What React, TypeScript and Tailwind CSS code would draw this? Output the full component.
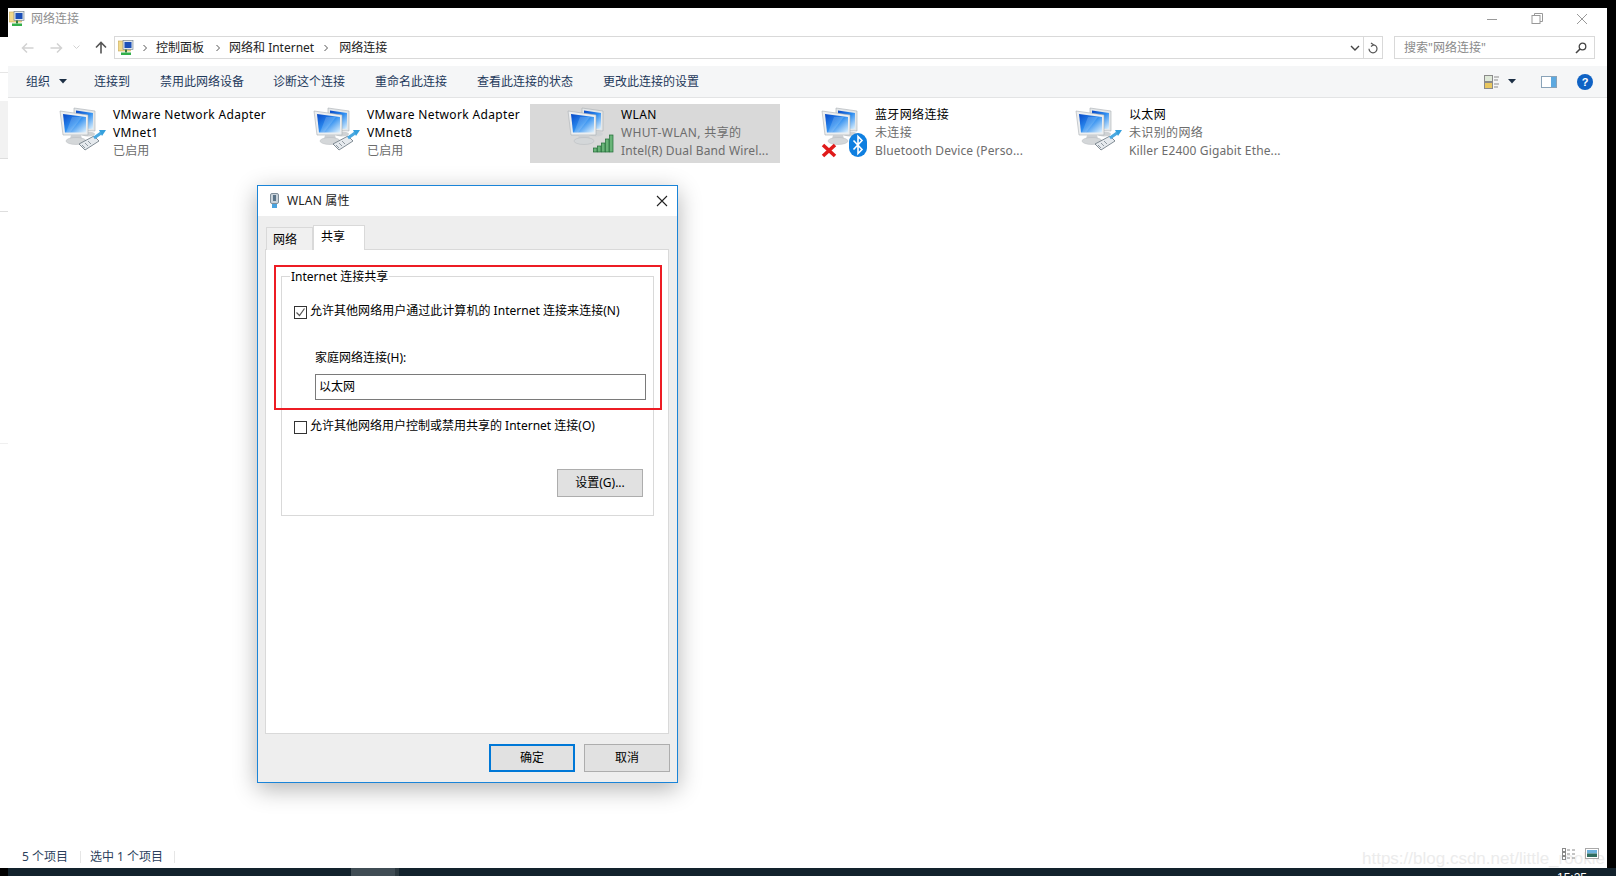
import React, { useId } from "react";

const font = "font-['Noto_Sans','Noto_Sans_CJK_SC',sans-serif]";

const NetIcon = ({ overlay }: { overlay: "cable" | "wifi" | "bluetooth" }) => {
  const id = useId();
  return (
    <svg width="48" height="48" viewBox="0 0 48 48" className="shrink-0 overflow-visible">
      <defs>
        <linearGradient id={id} x1="0" y1="0" x2="1" y2="1">
          <stop offset="0" stopColor="#0648c8" />
          <stop offset="0.5" stopColor="#2d8df0" />
          <stop offset="1" stopColor="#e2f3fd" />
        </linearGradient>
      </defs>
      {/* back monitor */}
      <polygon points="16,2 37,5 37,25 16,24" fill="#e4e7e9" stroke="#a9afb3" strokeWidth="0.6" />
      <polygon points="18,4.5 35,7 35,23 18,22" fill={`url(#${id})`} />
      <ellipse cx="30" cy="28" rx="7" ry="2.5" fill="#cfd2d4" />
      {/* front monitor */}
      <polygon points="2,5 30,9 30,29 5,29" fill="#eceef0" stroke="#a9afb3" strokeWidth="0.6" />
      <polygon points="5,8 28,11 28,26.5 7,26.5" fill={`url(#${id})`} />
      <polygon points="14,11 24,11 12,26.5 8,26.5" fill="#ffffff" opacity="0.18" />
      <polygon points="13,29 23,29 24,33 12,33" fill="#cdd0d3" />
      <ellipse cx="18" cy="35" rx="10" ry="3.5" fill="#d4d7d9" stroke="#b5b9bc" strokeWidth="0.5" />
      {overlay === "cable" && (
        <g>
          <polygon points="21,38 36,30 41,35 27,44" fill="#e6eaee" stroke="#66727c" strokeWidth="0.8" />
          <path d="M24,39 L27,42 M27,37 L30,40 M30,35 L33,38" stroke="#7a858e" strokeWidth="0.8" />
          <path d="M36,32 L43,27" stroke="#4aa8e0" strokeWidth="3" />
          <polygon points="41,24 48,24 44,30" fill="#35a0dd" />
        </g>
      )}
      {overlay === "wifi" && (
        <g fill="#69b478" stroke="#1f6b34" strokeWidth="0.7">
          <rect x="27.5" y="42" width="3.5" height="4" />
          <rect x="31.5" y="40" width="3.5" height="6" />
          <rect x="35.5" y="37" width="3.5" height="9" />
          <rect x="39.5" y="33" width="3.5" height="13" />
          <rect x="43.5" y="29" width="3.5" height="17" />
        </g>
      )}
      {overlay === "bluetooth" && (
        <g>
          <path d="M3,39 L15,50 M15,39 L3,50" stroke="#e01a1a" strokeWidth="3.6" />
          <rect x="29" y="27" width="18" height="24" rx="9" fill="#0f7fe0" />
          <path d="M33.5,34.5 L42,43.5 L38,47.5 L38,30.5 L42,34.5 L33.5,43.5" fill="none" stroke="#fff" strokeWidth="1.6" />
        </g>
      )}
    </svg>
  );
};

const FolderIcon = () => (
  <svg width="16" height="16" viewBox="0 0 16 16" className="shrink-0">
    <rect x="0.5" y="1" width="12" height="10" fill="#f1d98a" stroke="#c9a850" strokeWidth="0.6" />
    <rect x="5" y="0.5" width="10" height="9" fill="#dfe6ec" stroke="#6d7c8a" strokeWidth="0.6" />
    <rect x="6.5" y="2" width="7" height="6" fill="#1b4fb8" />
    <rect x="7" y="9.5" width="2" height="3" fill="#3a7a3a" />
    <rect x="3" y="12.5" width="10" height="2.5" fill="#32b04a" />
  </svg>
);

const Crumb = () => (
  <svg width="6" height="8" viewBox="0 0 6 8" className="shrink-0">
    <path d="M1.5,1 L4.5,4 L1.5,7" fill="none" stroke="#555" strokeWidth="1" />
  </svg>
);

const Arrow = ({ flip, color }: { flip?: boolean; color: string }) => (
  <svg width="13" height="12" viewBox="0 0 13 12" className={flip ? "shrink-0 rotate-180" : "shrink-0"}>
    <path d="M12.5,6 L1.5,6 M6,1.5 L1.5,6 L6,10.5" fill="none" stroke={color} strokeWidth="1.5" />
  </svg>
);

const Caret = () => (
  <svg width="8" height="5" viewBox="0 0 8 5" className="shrink-0">
    <polygon points="0,0 8,0 4,4.5" fill="#1c2f45" />
  </svg>
);

const items = [
  { l1: "VMware Network Adapter", l2: "VMnet1", l3: "已启用", overlay: "cable" as const, l2dark: true },
  { l1: "VMware Network Adapter", l2: "VMnet8", l3: "已启用", overlay: "cable" as const, l2dark: true },
  { l1: "WLAN", l2: "WHUT-WLAN, 共享的", l3: "Intel(R) Dual Band Wirel...", overlay: "wifi" as const, selected: true },
  { l1: "蓝牙网络连接", l2: "未连接", l3: "Bluetooth Device (Perso...", overlay: "bluetooth" as const },
  { l1: "以太网", l2: "未识别的网络", l3: "Killer E2400 Gigabit Ethe...", overlay: "cable" as const },
];

const App = () => {
  return (
    <div className={`${font} relative w-[1616px] h-[876px] overflow-hidden bg-black flex flex-col text-[12px] leading-[16px] text-[#1a1a1a]`}>
      <div className="h-2 shrink-0 bg-black" />
      <div className="flex flex-1 min-h-0">
        {/* left edge of the window behind */}
        <div className="w-2 shrink-0 flex flex-col">
          <div className="h-[29px] bg-black" />
          <div className="h-[36px] bg-white border-b border-[#e6e6e6]" />
          <div className="h-[28px] bg-white" />
          <div className="h-[58px] bg-[#f2f2f2] border-b border-[#dedede]" />
          <div className="h-[53px] bg-white border-b border-[#dedede]" />
          <div className="h-[232px] bg-white border-b border-[#f0f0f0]" />
          <div className="flex-1 bg-white" />
        </div>
        {/* explorer window */}
        <div className="flex-1 bg-white flex flex-col min-w-0">
          <div className="h-[27px] shrink-0 flex items-center pl-[1px] pr-5 pb-[5px] text-[#9a9a9a]">
            <FolderIcon />
            <span className="ml-[6px] text-[#8f8f8f]">网络连接</span>
            <svg width="100" height="12" viewBox="0 0 100 12" className="ml-auto">
              <path d="M0,6.5 H10" stroke="#999" strokeWidth="1" />
              <rect x="45" y="2.5" width="8" height="8" fill="none" stroke="#999" />
              <path d="M47.5,2.5 V0.5 H55.5 V8.5 H53" fill="none" stroke="#999" />
              <path d="M90,1 L100,11 M100,1 L90,11" stroke="#999" strokeWidth="1" />
            </svg>
          </div>
          {/* address bar */}
          <div className="mt-px h-[23px] shrink-0 flex items-center">
            <div className="w-[106px] shrink-0 flex items-center pl-[13px]">
              <Arrow color="#d2d2d2" />
              <span className="w-4" />
              <Arrow flip color="#d2d2d2" />
              <svg width="7" height="5" viewBox="0 0 7 5" className="ml-[10px] shrink-0">
                <path d="M0.5,0.5 L3.5,3.5 L6.5,0.5" fill="none" stroke="#d2d2d2" />
              </svg>
              <svg width="12" height="13" viewBox="0 0 12 13" className="ml-[15px] shrink-0">
                <path d="M6,12.5 V2 M1,6.5 L6,1.5 L11,6.5" fill="none" stroke="#555" strokeWidth="1.6" />
              </svg>
            </div>
            <div className="w-[1269px] h-[23px] shrink-0 border border-[#d9d9d9] flex items-center pl-[3px] text-[#222]">
              <FolderIcon />
              <span className="ml-2"><Crumb /></span>
              <span className="ml-[8px]">控制面板</span>
              <span className="ml-[11px]"><Crumb /></span>
              <span className="ml-[8px]">网络和 Internet</span>
              <span className="ml-[9px]"><Crumb /></span>
              <span className="ml-[10px]">网络连接</span>
              <svg width="10" height="6" viewBox="0 0 10 6" className="ml-auto shrink-0">
                <path d="M1,1 L5,5 L9,1" fill="none" stroke="#444" strokeWidth="1.4" />
              </svg>
              <div className="w-px h-full bg-[#d9d9d9] ml-[3px]" />
              <svg width="12" height="12" viewBox="0 0 12 12" className="mx-[3px] shrink-0">
                <path d="M4,1 L6.5,2.8 L4,4.6 M6,2.8 A4,4 0 1 1 2,6.8" fill="none" stroke="#555" strokeWidth="1.2" />
              </svg>
            </div>
            <div className="ml-[11px] w-[201px] h-[23px] shrink-0 border border-[#d9d9d9] flex items-center pl-[9px] pr-[7px] text-[#8a8a8a]">
              <span>搜索"网络连接"</span>
              <svg width="12" height="12" viewBox="0 0 12 12" className="ml-auto shrink-0">
                <circle cx="7.5" cy="4.5" r="3.3" fill="none" stroke="#444" strokeWidth="1.3" />
                <path d="M5,7 L1,11" stroke="#444" strokeWidth="1.6" />
              </svg>
            </div>
          </div>
          {/* toolbar */}
          <div className="mt-[7px] h-8 shrink-0 bg-[#f5f6f7] border-b border-[#e3e4e5] flex items-center text-[#1e395b] relative">
            <span className="ml-[18px]">组织</span>
            <span className="ml-[9px]"><Caret /></span>
            <span className="ml-[27px]">连接到</span>
            <span className="ml-[30px]">禁用此网络设备</span>
            <span className="ml-[29px]">诊断这个连接</span>
            <span className="ml-[30px]">重命名此连接</span>
            <span className="ml-[30px]">查看此连接的状态</span>
            <span className="ml-[30px]">更改此连接的设置</span>
            <svg width="15" height="14" viewBox="0 0 15 14" className="ml-auto shrink-0">
              <rect x="0.5" y="0.5" width="8" height="6" fill="#dfe9d8" stroke="#8b8b8b" />
              <rect x="0.5" y="7.5" width="8" height="6" fill="#e9c75f" stroke="#8b8b8b" />
              <path d="M10,2 H15 M10,5 H14 M10,9 H15 M10,12 H14" stroke="#8b8b8b" />
            </svg>
            <span className="ml-[9px]"><Caret /></span>
            <svg width="16" height="12" viewBox="0 0 16 12" className="ml-[25px] shrink-0">
              <rect x="0.5" y="0.5" width="15" height="11" fill="#fff" stroke="#8aa3b8" />
              <rect x="10" y="1" width="5" height="10" fill="#5da9e0" />
            </svg>
            <svg width="16" height="16" viewBox="0 0 16 16" className="ml-[20px] mr-[14px] shrink-0">
              <circle cx="8" cy="8" r="8" fill="#0f62c4" />
              <text x="8" y="12" fontSize="11" fontWeight="700" textAnchor="middle" fill="#fff" fontFamily="Liberation Sans, sans-serif">?</text>
            </svg>
          </div>
          {/* connection list */}
          <div className="mt-[6px] flex pl-[14px]">
            {items.map((item, i) => (
              <div
                key={i}
                className={`w-[250px] mr-1 h-[59px] shrink-0 flex pl-[36px] pt-[2px] ${item.selected ? "bg-[#d9d9d9]" : ""}`}
              >
                <NetIcon overlay={item.overlay} />
                <div className="ml-[7px] flex flex-col whitespace-nowrap leading-[17.5px] tracking-[0.35px]">
                  <span className="text-black">{item.l1}</span>
                  <span className={item.l2dark ? "text-black" : "text-[#6d6d6d]"}>{item.l2}</span>
                  <span className="text-[#6d6d6d] tracking-[0.15px] mt-px">{item.l3}</span>
                </div>
              </div>
            ))}
          </div>
          {/* status bar */}
          <div className="mt-auto h-[24px] shrink-0 flex items-center pl-[14px] pr-2 pt-[1px] text-[#2b3f5c] relative">
            <span>5 个项目</span>
            <span className="w-px h-3 bg-[#e6e6e6] ml-[12px]" />
            <span className="ml-[9px]">选中 1 个项目</span>
            <span className="w-px h-3 bg-[#e6e6e6] ml-[11px]" />
            <span className="font-['Liberation_Sans',sans-serif] text-[17px] leading-[20px] text-[#ececec] whitespace-nowrap absolute left-[1354px] top-[5px]">
              https://blog.csdn.net/little_rookie
            </span>
            <svg width="13" height="12" viewBox="0 0 13 12" className="ml-auto shrink-0 relative -top-[3px]">
              <rect x="0.5" y="0.5" width="3" height="3" fill="#fff" stroke="#8a8a8a" />
              <rect x="0.5" y="4.5" width="3" height="3" fill="#fff" stroke="#8a8a8a" />
              <rect x="0.5" y="8.5" width="3" height="3" fill="#fff" stroke="#8a8a8a" />
              <path d="M5,2 H8 M10,2 H13 M5,6 H8 M10,6 H13 M5,10 H8 M10,10 H13" stroke="#8a8a8a" />
            </svg>
            <svg width="14" height="11" viewBox="0 0 14 11" className="ml-[10px] shrink-0 relative -top-[3px]">
              <rect x="0.5" y="0.5" width="13" height="10" fill="#fff" stroke="#a8a8a8" />
              <rect x="2" y="2" width="10" height="3.5" fill="#6bb1dc" />
              <rect x="2" y="5.5" width="10" height="3.5" fill="#2f6d5f" />
            </svg>
          </div>
        </div>
        <div className="w-[9px] shrink-0 bg-black" />
      </div>
      {/* taskbar, cut off by the screenshot */}
      <div className="h-2 shrink-0 ml-2 bg-[#12222c] flex relative overflow-hidden">
        <div className="ml-[343px] w-[44px] bg-[#3f4c54]" />
        <div className="w-1 bg-[#2b383f]" />
        <span className="absolute left-[1549px] top-[3px] font-['Liberation_Sans',sans-serif] text-[12px] leading-[14px] text-white">15:25</span>
      </div>

      {/* properties dialog */}
      <div className="absolute left-[257px] top-[185px] w-[421px] h-[598px] bg-[#eeeeee] border border-[#1a84d8] shadow-[0_6px_22px_rgba(0,0,0,0.3)] flex flex-col text-black">
        <div className="h-[30px] shrink-0 bg-white flex items-center pl-3 pr-[6px]">
          <svg width="9" height="16" viewBox="0 0 9 16" className="shrink-0">
            <rect x="0.5" y="0.5" width="8" height="10" rx="1.5" fill="#c9d3db" stroke="#7f8e9a" />
            <rect x="3" y="2" width="3" height="6" fill="#5b7488" />
            <rect x="2" y="11" width="5" height="4" fill="#4aa3df" />
          </svg>
          <span className="ml-[8px] text-[#222] tracking-[0.2px]">WLAN 属性</span>
          <svg width="12" height="12" viewBox="0 0 12 12" className="ml-auto mr-[3px] shrink-0">
            <path d="M1,1 L11,11 M11,1 L1,11" stroke="#222" strokeWidth="1.1" />
          </svg>
        </div>
        {/* tabs */}
        <div className="h-[34px] shrink-0 flex items-end pl-[8px] relative z-10 -mb-px">
          <div className="w-[47px] h-[23px] bg-[#f0f0f0] border border-b-0 border-[#d9d9d9] flex items-center pl-[6px] pt-[2px]">网络</div>
          <div className="w-[52px] h-[25px] bg-white border border-b-0 border-[#d9d9d9] flex items-center pl-[7px] pb-[2px]">共享</div>
        </div>
        {/* tab panel */}
        <div className="ml-[7px] mr-2 h-[485px] shrink-0 bg-white border border-[#d9d9d9] relative pl-[15px] pr-[14px] pt-[26px]">
          <div className="h-[240px] border border-[#d9d9d9] relative pl-3">
            <span className="absolute left-2 -top-2 bg-white px-[1px] leading-[16px] whitespace-nowrap">Internet 连接共享</span>
            <div className="mt-[29px] flex items-center">
              <div className="w-[13px] h-[13px] border border-[#333] flex items-center justify-center shrink-0">
                <svg width="11" height="11" viewBox="0 0 11 11">
                  <path d="M1.5,5.5 L4.5,8.5 L9.5,1.5" fill="none" stroke="#555" strokeWidth="1.2" />
                </svg>
              </div>
              <span className="ml-[3px] -mt-1 whitespace-nowrap tracking-[0.03px]">允许其他网络用户通过此计算机的 Internet 连接来连接(N)</span>
            </div>
            <div className="mt-[31px] ml-[21px] leading-[16px]">家庭网络连接(H):</div>
            <div className="mt-[8px] ml-[21px] w-[331px] h-[26px] border border-[#7a7a7a] flex items-center pl-[3px] pb-px bg-white">以太网</div>
            <div className="mt-[21px] flex items-center">
              <div className="w-[13px] h-[13px] border border-[#333] shrink-0" />
              <span className="ml-[3px] -mt-1 whitespace-nowrap">允许其他网络用户控制或禁用共享的 Internet 连接(O)</span>
            </div>
            <div className="mt-[35px] flex justify-end pr-[10px]">
              <div className="w-[86px] h-[28px] bg-[#e1e1e1] border border-[#adadad] flex items-center justify-center">设置(G)...</div>
            </div>
          </div>
        </div>
        {/* dialog buttons */}
        <div className="mt-[10px] flex justify-end pr-[7px] gap-[9px]">
          <div className="w-[86px] h-[28px] bg-[#e1e1e1] border-2 border-[#0078d7] flex items-center justify-center">确定</div>
          <div className="w-[86px] h-[28px] bg-[#e1e1e1] border border-[#adadad] flex items-center justify-center">取消</div>
        </div>
        {/* red annotation */}
        <div className="absolute left-4 top-[79px] w-[388px] h-[145px] border-2 border-[#ed1c24] pointer-events-none" />
      </div>
    </div>
  );
};

export default App;
